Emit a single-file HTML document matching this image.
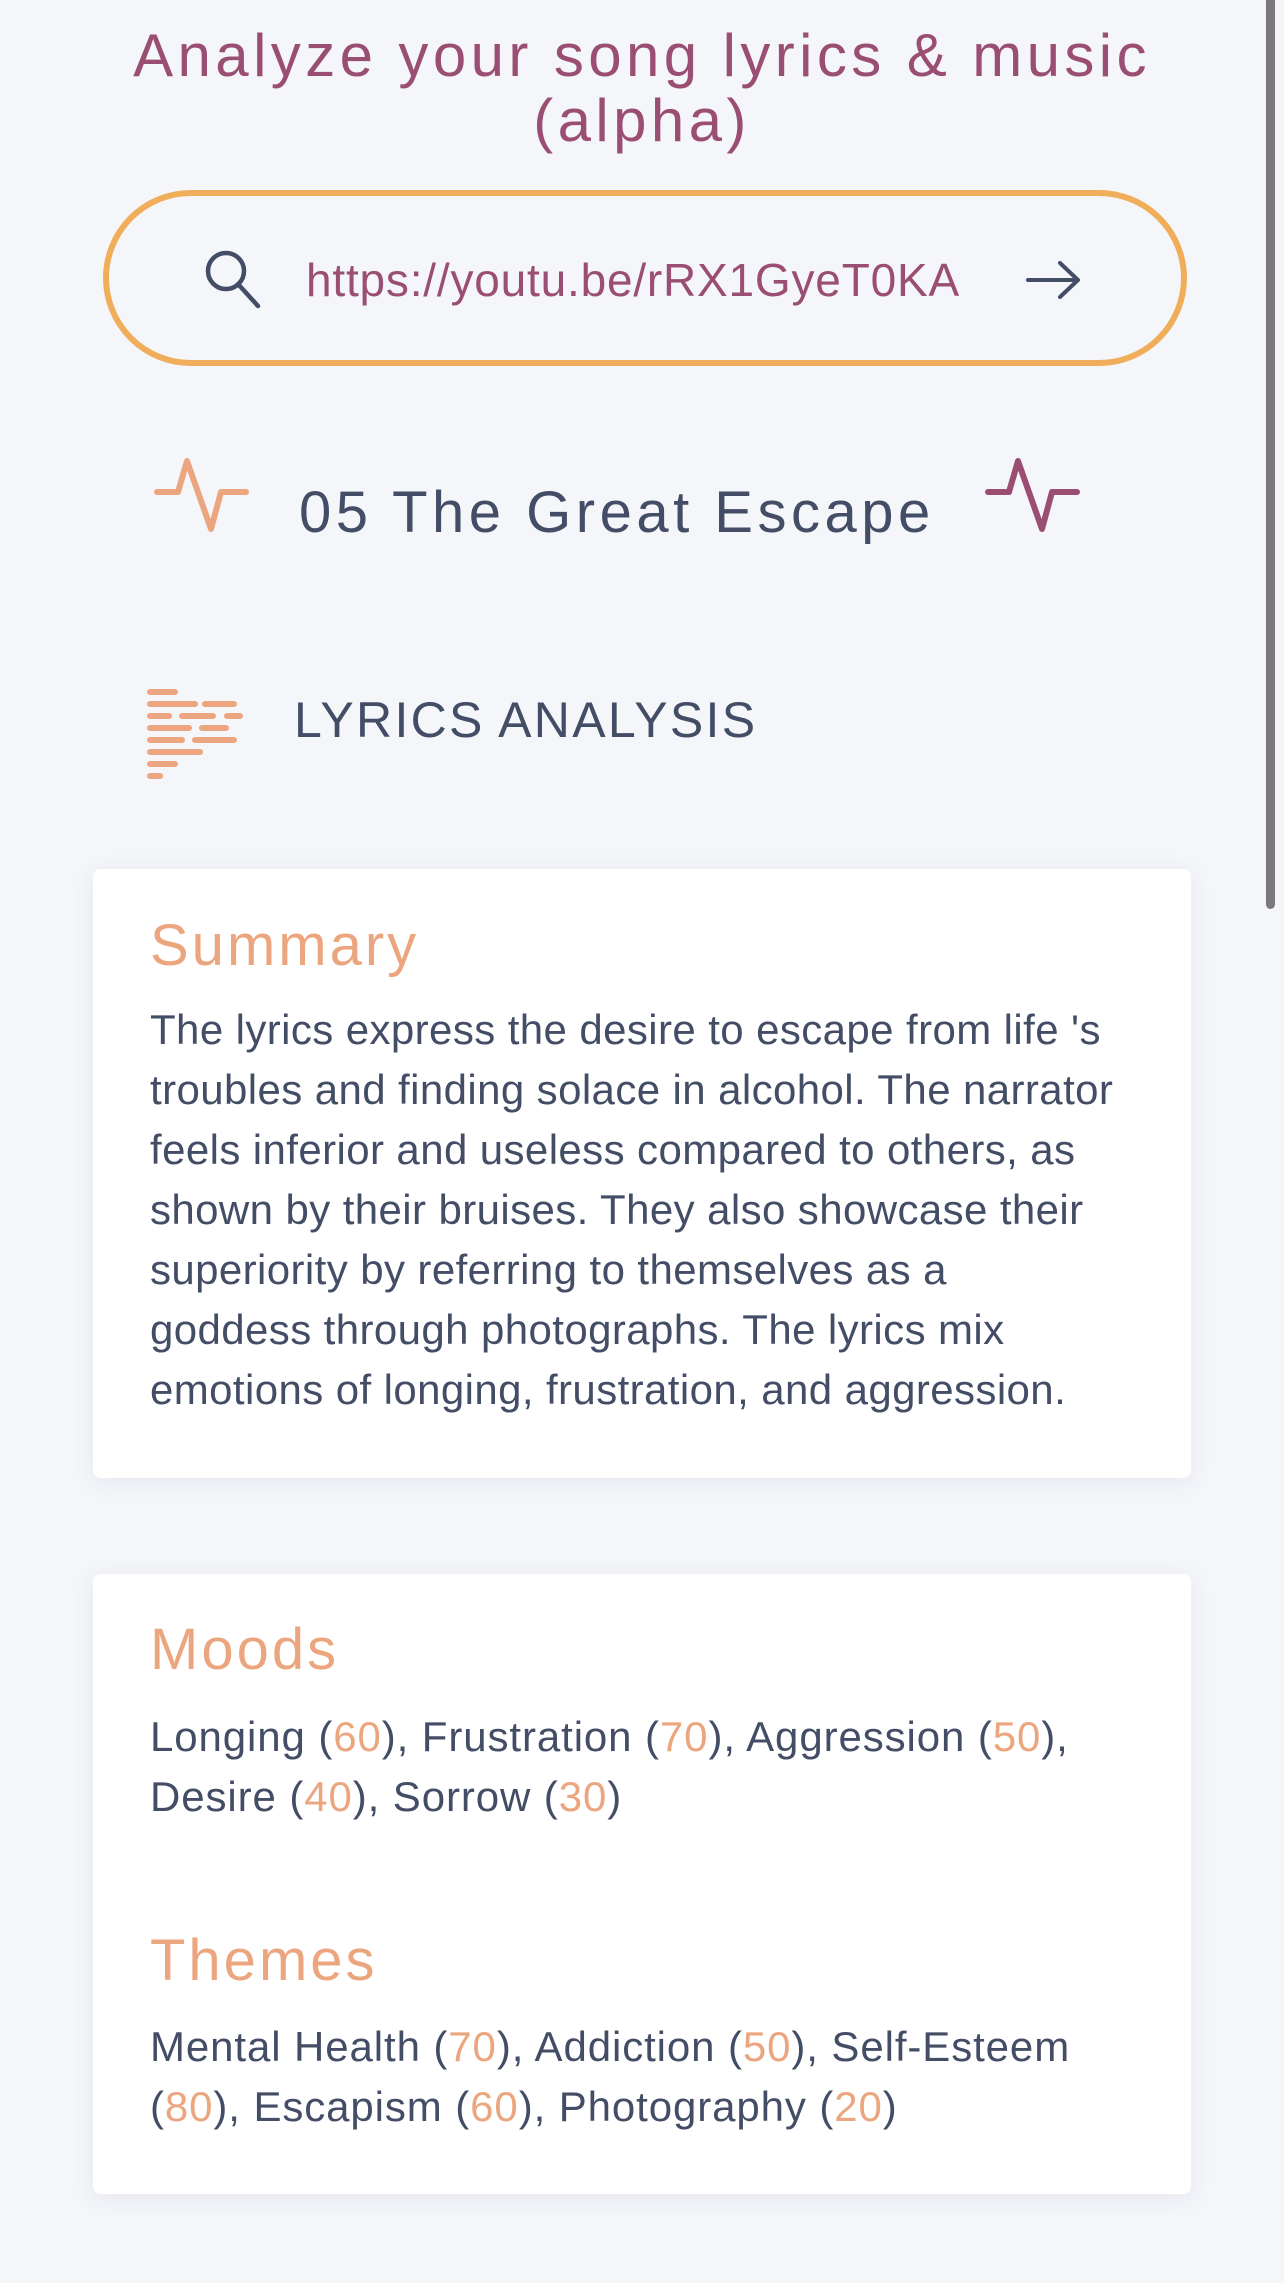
<!DOCTYPE html>
<html><head><meta charset="utf-8"><style>
html,body{margin:0;padding:0;}
body{width:1284px;height:2283px;background:#f4f6fa;position:relative;overflow:hidden;font-family:"Liberation Sans",sans-serif;color:#434d66;}
.a{position:absolute;white-space:nowrap;}
.title{left:0;width:1284px;text-align:center;color:#9a4f72;font-size:60px;line-height:65px;letter-spacing:4.4px;top:23px;}
.pill{position:absolute;left:103px;top:190px;width:1072px;height:164px;border:6px solid #f0ad5a;border-radius:90px;}
.card{position:absolute;left:93px;width:1098px;background:#fff;border-radius:8px;box-shadow:0 4px 24px rgba(60,70,100,0.08);}
.h{color:#eca67f;font-size:58px;line-height:56px;left:150px;letter-spacing:3px;}
.b{font-size:42px;line-height:60px;left:150px;letter-spacing:0.4px;}
.o{color:#eca67f;}
</style></head><body>
<div class="a title">Analyze your song lyrics &amp; music<br>(alpha)</div>
<div class="pill"></div>
<svg class="a" style="left:200px;top:246px" width="66" height="64" viewBox="0 0 66 64"><circle cx="26" cy="25" r="18" fill="none" stroke="#434d66" stroke-width="4.5"/><line x1="38" y1="38" x2="58" y2="60" stroke="#434d66" stroke-width="4.5" stroke-linecap="round"/></svg>
<div class="a" style="left:306px;top:250px;font-size:46px;line-height:60px;letter-spacing:0.8px;color:#9a4f72;">https://youtu.be/rRX1GyeT0KA</div>
<svg class="a" style="left:1024px;top:258px" width="60" height="44" viewBox="0 0 60 44"><path d="M4 22H54M36 5L54 22L36 39" fill="none" stroke="#434d66" stroke-width="4" stroke-linecap="round" stroke-linejoin="round"/></svg>

<svg class="a" style="left:152px;top:455px" width="102" height="80" viewBox="0 0 102 80"><path d="M5 37H26L35 6L59 74L69 37H94" fill="none" stroke="#eca67f" stroke-width="6" stroke-linecap="round" stroke-linejoin="round"/></svg>
<div class="a" style="left:299px;top:478px;font-size:58px;line-height:70px;letter-spacing:4.5px;color:#434d66;">05 The Great Escape</div>
<svg class="a" style="left:983px;top:455px" width="102" height="80" viewBox="0 0 102 80"><path d="M5 37H26L35 6L59 74L69 37H94" fill="none" stroke="#9a4f72" stroke-width="6" stroke-linecap="round" stroke-linejoin="round"/></svg>

<svg class="a" style="left:145px;top:688px" width="102" height="96" viewBox="0 0 102 96" stroke="#eca67f" stroke-width="6" stroke-linecap="round"><path d="M5 4H30M5 16H50M60 16H89M5 28H24M37 28H68M82 28H95M5 40H44M57 40H81M5 52H37M50 52H89M5 64H55M5 76H30M5 88H15"/></svg>
<div class="a" style="left:294px;top:690px;font-size:50px;line-height:60px;letter-spacing:2.3px;color:#434d66;">LYRICS ANALYSIS</div>

<div class="card" style="top:869px;height:609px;"></div>
<div class="a h" style="top:918px;">Summary</div>
<div class="a b" style="top:1000px;">The lyrics express the desire to escape from life 's<br>troubles and finding solace in alcohol. The narrator<br>feels inferior and useless compared to others, as<br>shown by their bruises. They also showcase their<br>superiority by referring to themselves as a<br>goddess through photographs. The lyrics mix<br>emotions of longing, frustration, and aggression.</div>

<div class="card" style="top:1574px;height:620px;"></div>
<div class="a h" style="top:1622px;">Moods</div>
<div class="a b" style="top:1707px;letter-spacing:0.9px;">Longing (<span class="o">60</span>), Frustration (<span class="o">70</span>), Aggression (<span class="o">50</span>),<br>Desire (<span class="o">40</span>), Sorrow (<span class="o">30</span>)</div>
<div class="a h" style="top:1933px;">Themes</div>
<div class="a b" style="top:2017px;letter-spacing:0.9px;">Mental Health (<span class="o">70</span>), Addiction (<span class="o">50</span>), Self-Esteem<br>(<span class="o">80</span>), Escapism (<span class="o">60</span>), Photography (<span class="o">20</span>)</div>

<div class="a" style="left:1266px;top:0;width:9px;height:909px;background:#7a7a7c;border-radius:0 0 5px 5px;"></div>
</body></html>
